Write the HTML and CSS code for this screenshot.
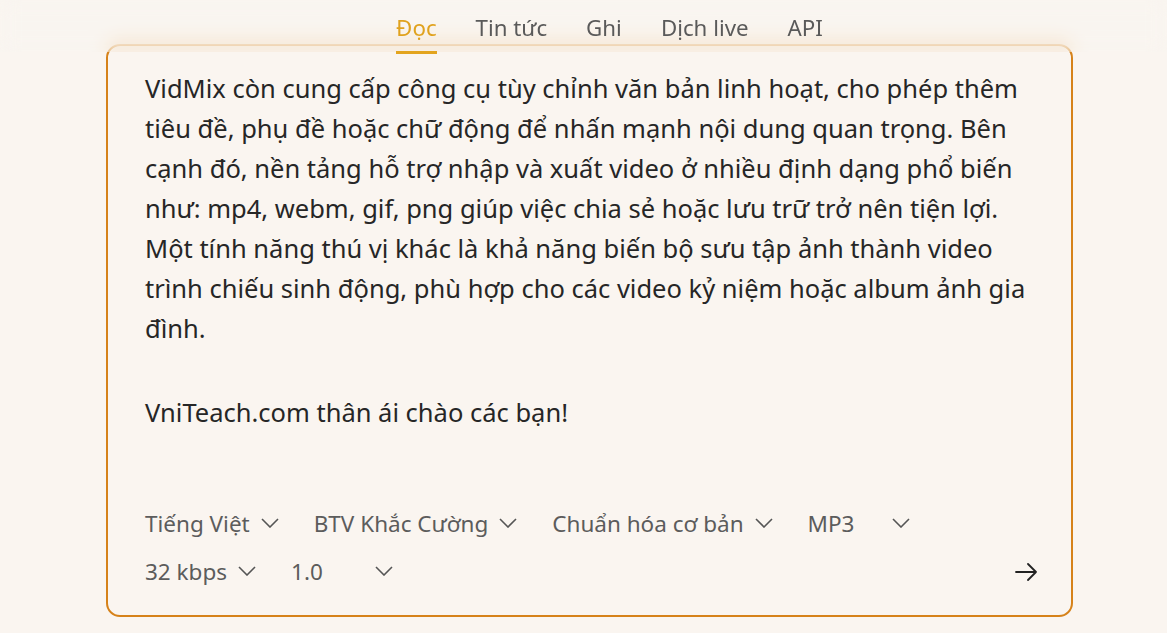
FILE: index.html
```html
<!DOCTYPE html>
<html lang="vi">
<head>
  <meta charset="UTF-8">
  <meta name="viewport" content="width=device-width, initial-scale=1.0">
  <title>VidMix - Đọc</title>
  <link rel="stylesheet" href="styles.css">
</head>
<body>
  <nav class="tabs">
    <a class="tab active" href="#">Đọc</a>
    <a class="tab" href="#">Tin tức</a>
    <a class="tab" href="#">Ghi</a>
    <a class="tab" href="#">Dịch live</a>
    <a class="tab" href="#">API</a>
  </nav>

  <main class="card">
    <div class="text">
      <p>VidMix còn cung cấp công cụ tùy chỉnh văn bản linh hoạt, cho phép thêm tiêu đề, phụ đề hoặc chữ động để nhấn mạnh nội dung quan trọng. Bên cạnh đó, nền tảng hỗ trợ nhập và xuất video ở nhiều định dạng phổ biến như: mp4, webm, gif, png giúp việc chia sẻ hoặc lưu trữ trở nên tiện lợi. Một tính năng thú vị khác là khả năng biến bộ sưu tập ảnh thành video trình chiếu sinh động, phù hợp cho các video kỷ niệm hoặc album ảnh gia đình.</p>
      <p>VniTeach.com thân ái chào các bạn!</p>
    </div>

    <div class="controls">
      <button class="pick">Tiếng Việt <svg class="chev" viewBox="0 0 18 10"><path d="M1 1l8 8 8-8"/></svg></button>
      <button class="pick">BTV Khắc Cường <svg class="chev" viewBox="0 0 18 10"><path d="M1 1l8 8 8-8"/></svg></button>
      <button class="pick">Chuẩn hóa cơ bản <svg class="chev" viewBox="0 0 18 10"><path d="M1 1l8 8 8-8"/></svg></button>
      <button class="pick wide">MP3 <svg class="chev" viewBox="0 0 18 10"><path d="M1 1l8 8 8-8"/></svg></button>
      <button class="pick">32 kbps <svg class="chev" viewBox="0 0 18 10"><path d="M1 1l8 8 8-8"/></svg></button>
      <button class="pick wide">1.0 <svg class="chev" viewBox="0 0 18 10"><path d="M1 1l8 8 8-8"/></svg></button>
      <button class="go" aria-label="Đọc">
        <svg width="22" height="20" viewBox="0 0 22 20" fill="none" stroke="#222" stroke-width="1.8" stroke-linecap="round" stroke-linejoin="round">
          <path d="M1 10h20M13 2l8 8-8 8"/>
        </svg>
      </button>
    </div>
  </main>
</body>
</html>
```

FILE: styles.css
```css
* { box-sizing: border-box; }

body {
  margin: 0;
  background: #faf5f0;
  font-family: "Noto Sans", "Open Sans", sans-serif;
  color: #262626;
  padding: 44px 0 0 12px;
}

.tabs {
  position: fixed;
  top: 0;
  left: 0;
  right: 0;
  height: 52px;
  display: flex;
  align-items: flex-start;
  justify-content: center;
  gap: 39px;
  padding: 12px 0 0 52px;
  background: rgba(250, 245, 240, 0.15);
  backdrop-filter: blur(9px);
  z-index: 2;
}
.tab {
  position: relative;
  font-size: 22.3px;
  color: #5a5a5a;
  text-decoration: none;
  line-height: 32px;
}
.tab.active {
  color: #e0a21e;
}
.tab.active::after {
  content: "";
  position: absolute;
  left: 0;
  right: 0;
  bottom: -10px;
  height: 3px;
  background: #e3a41e;
}

.card {
  width: 967px;
  height: 573px;
  margin: 0 auto;
  border: 2px solid #d6821a;
  border-radius: 14px;
  padding: 22px 34px 27px 37px;
  display: flex;
  flex-direction: column;
  justify-content: space-between;
}

.text p {
  margin: 0 0 44px;
  font-size: 25.5px;
  line-height: 40px;
}

.controls {
  display: flex;
  flex-wrap: wrap;
  align-items: center;
  column-gap: 35px;
  row-gap: 16px;
}
.pick {
  display: flex;
  align-items: center;
  gap: 11px;
  background: none;
  border: 0;
  padding: 0;
  font: inherit;
  font-size: 22.5px;
  line-height: 32px;
  color: #5c5c5c;
  cursor: pointer;
}
.pick.wide {
  min-width: 102px;
  justify-content: space-between;
}
.chev {
  width: 18px;
  height: 10px;
  fill: none;
  stroke: #555;
  stroke-width: 1.6;
  margin-top: -3px;
}
.go {
  margin-left: auto;
  background: none;
  border: 0;
  padding: 0;
  cursor: pointer;
  display: flex;
}
```
